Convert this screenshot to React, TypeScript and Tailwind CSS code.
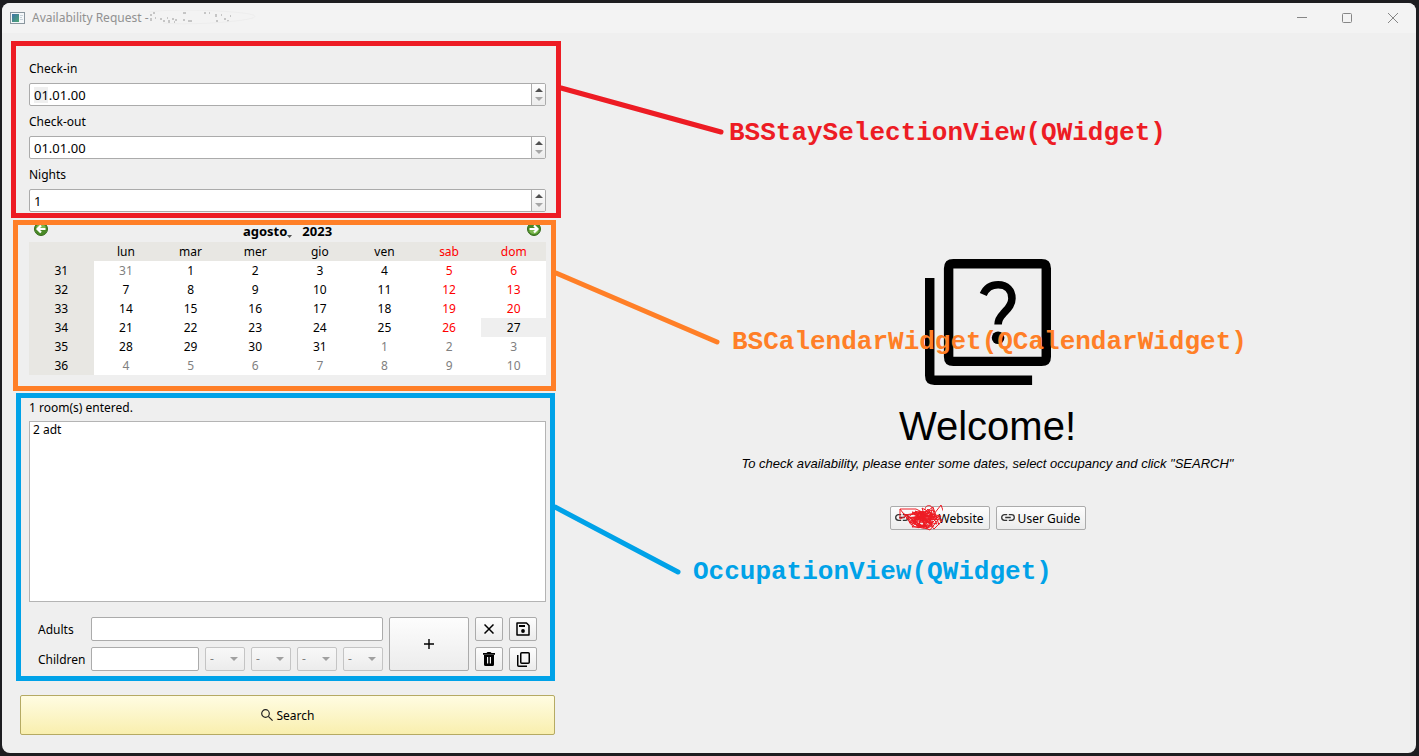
import React, { useState } from 'react';

interface Day {
    label: number;
    muted?: boolean;
    weekend?: boolean;
    selected?: boolean;
}

interface Week {
    number: number;
    days: Day[];
}

const weekdays = ['lun', 'mar', 'mer', 'gio', 'ven', 'sab', 'dom'];

// August 2023 starts on a Tuesday, the grid begins on Monday 31 July
const buildWeeks = (): Week[] =>
    Array.from({ length: 6 }, (_, row) => ({
        number: 31 + row,
        days: Array.from({ length: 7 }, (_, col) => {
            const offset = row * 7 + col;
            const muted = offset < 1 || offset > 31;
            const label = offset < 1 ? 31 : offset > 31 ? offset - 31 : offset;
            return { label, muted, weekend: col > 4, selected: offset === 27 };
        }),
    }));

const dayColor = (day: Day) => {
    if (day.selected) return 'bg-[#efefef] text-black';
    if (day.muted) return 'text-[#808080]';
    return day.weekend ? 'text-[#ff0000]' : 'text-black';
};

const buttonClass =
    'flex items-center justify-center rounded-xs border border-[#ababab] bg-linear-to-b from-[#fdfdfd] to-[#ececec]';

const TitleBar = () => (
    <header className="flex h-[30px] items-center bg-[#f3f3f3] pl-2 text-xs text-[#919191]">
        <svg className="h-3 w-4" viewBox="0 0 16 12" aria-hidden="true">
            <defs>
                <linearGradient id="app-icon" x1="0" y1="0" x2="1" y2="1">
                    <stop offset="0" stopColor="#3f74a8" />
                    <stop offset="1" stopColor="#4da673" />
                </linearGradient>
            </defs>
            <rect x="0.5" y="0.5" width="14" height="11" fill="#f5f8fa" stroke="#8a969e" />
            <rect x="2" y="2" width="7" height="8" fill="url(#app-icon)" />
            <path d="M10 3.500h3M10 5.500h2M10 7.500h3" stroke="#c8d3da" />
        </svg>
        <h1 className="ml-1.5">Availability Request -</h1>
        <svg className="h-4 w-[110px]" viewBox="0 0 110 16" aria-hidden="true">
            <path
                d="M2 4v2M2 8v3M4 3h2M6 8h1M12 8v2M14 11h2M18 8h1M20 10v3M23 9h2M25 12h1M27 9v2M34 3h3M34 10h2M39 11h4M55 3h2M60 3h1M67 4v3M68 10v2M72 5h1M75 9h2M78 11h2M81 6h1"
                stroke="#989898"
                fill="none"
            />
            <path d="M0 2C20-1 60 0 84 2s30 5 10 8-60 5-80 3" stroke="#ededed" fill="none" />
        </svg>
        <div className="ml-auto flex h-full">
            <button type="button" aria-label="Minimize" className="flex w-[45px] items-center justify-center">
                <svg className="size-[10px]" viewBox="0 0 10 10"><path d="M0 4.500h10" stroke="#868686" /></svg>
            </button>
            <button type="button" aria-label="Maximize" className="flex w-[45px] items-center justify-center">
                <svg className="size-[10px]" viewBox="0 0 10 10">
                    <rect x="0.5" y="0.5" width="9" height="9" rx="1" fill="none" stroke="#868686" />
                </svg>
            </button>
            <button type="button" aria-label="Close" className="flex w-[47px] items-center justify-center">
                <svg className="size-[10px]" viewBox="0 0 10 10"><path d="M0 0l10 10M10 0L0 10" stroke="#868686" /></svg>
            </button>
        </div>
    </header>
);

const SpinField = ({ id, label, initial, marked }: { id: string; label: string; initial: string; marked?: boolean }) => {
    const [value, setValue] = useState(initial);

    return (
        <div className="flex flex-col gap-1.5">
            <label htmlFor={id} className="h-[18px] leading-5">{label}</label>
            <div className="relative flex h-[23px] overflow-hidden rounded-xs border border-[#ababab] bg-white">
                {marked && <span className="absolute top-[3px] left-1 h-4 w-3.5 bg-[#efefef]" />}
                <input
                    id={id}
                    value={value}
                    onChange={(e) => setValue(e.target.value)}
                    className="relative min-w-0 flex-1 bg-transparent pt-0.5 pl-1 text-[13px] outline-none"
                />
                <div className="flex w-3.5 flex-col border-l border-[#ababab] bg-linear-to-b from-[#fdfdfd] to-[#ececec] py-px">
                    <button type="button" aria-label={`${label} up`} className="flex flex-1 items-center justify-center">
                        <svg className="h-1 w-2" viewBox="0 0 8 4"><path d="M0 4l4-4 4 4z" fill="#505050" /></svg>
                    </button>
                    <button type="button" aria-label={`${label} down`} className="flex flex-1 items-center justify-center">
                        <svg className="h-1 w-2" viewBox="0 0 8 4"><path d="M0 0l4 4 4-4z" fill="#a6a6a6" /></svg>
                    </button>
                </div>
            </div>
        </div>
    );
};

const GreenArrow = ({ flip }: { flip?: boolean }) => (
    <svg className={flip ? 'size-3.5 rotate-180' : 'size-3.5'} viewBox="0 0 14 14" aria-hidden="true">
        <circle cx="7" cy="7" r="6.5" fill="#4a8a27" stroke="#356b1c" />
        <path d="M2 5.500a5.300 5.300 0 0 1 10 0c-3 1.500-7 1.500-10 0z" fill="#7db84f" />
        <path d="M11.500 7H4M7 3.500L3.500 7 7 10.500" fill="none" stroke="#fff" strokeWidth="2.200" />
    </svg>
);

const Calendar = () => (
    <div>
        <div className="flex h-[21px] items-start justify-between px-[5px] pt-px">
            <button type="button" aria-label="Previous month"><GreenArrow /></button>
            <div className="flex gap-2.5 text-[13px] leading-[18px] font-bold">
                <button type="button" className="flex items-end">
                    agosto
                    <svg className="mb-0.5 h-[3px] w-[5px]" viewBox="0 0 5 3"><path d="M0 0h5L2.500 3z" fill="#505050" /></svg>
                </button>
                <button type="button">2023</button>
            </div>
            <button type="button" aria-label="Next month"><GreenArrow flip /></button>
        </div>
        <table className="w-full table-fixed border-collapse bg-white text-center">
            <thead className="bg-[#e8e7e3]">
                <tr className="h-[19px]">
                    <th className="p-0" aria-label="Week" />
                    {weekdays.map((name, i) => (
                        <th key={name} className={i > 4 ? 'p-0 leading-[19px] font-normal text-[#ff0000]' : 'p-0 leading-[19px] font-normal'}>
                            {name}
                        </th>
                    ))}
                </tr>
            </thead>
            <tbody>
                {buildWeeks().map((week) => (
                    <tr key={week.number} className="h-[19px]">
                        <th className="bg-[#e8e7e3] p-0 leading-[19px] font-normal">{week.number}</th>
                        {week.days.map((day, i) => (
                            <td key={i} className={`p-0 leading-[19px] ${dayColor(day)}`}>{day.label}</td>
                        ))}
                    </tr>
                ))}
            </tbody>
        </table>
    </div>
);

const ChildAge = ({ index }: { index: number }) => (
    <div className="relative w-10 shrink-0">
        <select
            disabled
            aria-label={`Age of child ${index}`}
            className="h-6 w-full appearance-none rounded-xs border border-[#c4c4c4] bg-linear-to-b from-[#f8f8f8] to-[#ececec] pl-1 text-[#808080] opacity-100"
        >
            <option>-</option>
        </select>
        <svg className="pointer-events-none absolute top-2.5 right-[7px] h-1 w-2" viewBox="0 0 8 4">
            <path d="M0 0l4 4 4-4z" fill="#a0a0a0" />
        </svg>
    </div>
);

const Occupation = () => (
    <div>
        <p id="rooms" className="h-[18px] leading-[18px]">1 room(s) entered.</p>
        <ul aria-labelledby="rooms" className="mt-1 h-[181px] border border-[#b4b4b4] bg-white px-[3px] leading-4">
            <li>2 adt</li>
        </ul>
        <div className="mx-[9px] mt-[15px] grid grid-cols-[47px_minmax(0,1fr)_80px_28px_28px] grid-rows-[24px_24px] gap-1.5">
            <label htmlFor="adults" className="self-center pt-0.5">Adults</label>
            <input id="adults" className="w-full rounded-xs border border-[#ababab] bg-white px-1" />
            <button type="button" aria-label="Add room" className={`row-span-2 ${buttonClass}`}>
                <svg className="size-[10px]" viewBox="0 0 10 10"><path d="M5 0v10M0 5h10" stroke="#000" strokeWidth="1.400" /></svg>
            </button>
            <button type="button" aria-label="Clear" className={buttonClass}>
                <svg className="size-[10px]" viewBox="0 0 10 10"><path d="M.5.5l9 9M9.500.5l-9 9" stroke="#000" strokeWidth="1.500" /></svg>
            </button>
            <button type="button" aria-label="Save" className={buttonClass}>
                <svg className="size-3.5" viewBox="0 0 14 14">
                    <path d="M1 1h9.500l2.500 2.500V13H1z" fill="none" stroke="#000" strokeWidth="1.500" strokeLinejoin="round" />
                    <path d="M3 3h6v2H3z" />
                    <circle cx="7" cy="9" r="1.900" />
                </svg>
            </button>
            <label htmlFor="children" className="self-center pt-0.5">Children</label>
            <div className="flex gap-1.5">
                <input id="children" className="h-6 w-0 flex-1 rounded-xs border border-[#ababab] bg-white px-1" />
                {[1, 2, 3, 4].map((n) => <ChildAge key={n} index={n} />)}
            </div>
            <button type="button" aria-label="Delete" className={buttonClass}>
                <svg className="h-3.5 w-3" viewBox="0 0 12 14">
                    <path fillRule="evenodd" d="M0 1h3.500l1-1h3l1 1H12v1.800H0zM1 3h10v9.500q0 1.500-1.500 1.500h-7Q1 14 1 12.500zM4 5v6.500h1.200V5zM6.800 5v6.500H8V5z" />
                </svg>
            </button>
            <button type="button" aria-label="Duplicate" className={buttonClass}>
                <svg className="h-[15px] w-[13px]" viewBox="0 0 13 15" fill="none" stroke="#000" strokeWidth="1.500">
                    <rect x="3.750" y="0.750" width="8.500" height="10.500" rx="1" />
                    <path d="M.75 3v10.250q0 1 1 1H10" />
                </svg>
            </button>
        </div>
    </div>
);

const LinkIcon = () => (
    <svg className="h-[7px] w-3.5" viewBox="0 0 14 7" fill="none" stroke="#333" strokeWidth="1.300" aria-hidden="true">
        <path d="M6.200.7H3.500a2.800 2.800 0 0 0 0 5.600h2.700M7.800.7h2.700a2.800 2.800 0 0 1 0 5.600H7.800M4.200 3.500h5.600" />
    </svg>
);

const Scribble = () => (
    <svg
        className="pointer-events-none absolute -top-[3px] left-2 h-7 w-[44px]"
        viewBox="0 0 44 28"
        fill="none"
        stroke="#ed1c24"
        aria-hidden="true"
    >
        <path d="M1 5h16l8 4-16 2-8 4V5l12 16 8-14 5 16-16-5 22-10-6 15-19-9 26-3-9 11L6 11l29-5-6 18-13-16 19 14-22 1 16-18 9 15-25-6 27-2-12 12-12-17 22 8-27 3 20 8 11-14-21-4 14 17 8-8h5l-6-16-14 18-5-15 20 12-24-2 15-11 6 18" />
        <path d="M26 6c0-6 8-6 7 0l-3 12c-3 8-18 7-20-1s13-14 21-4-7 16-14 7 6-12 13-7M4 9l18 13 14-9-23-5 20 13-15 1-6-8 25-4" />
        <path d="M15 10l17 9M17 16l18-6M14 18l16-10M20 8l8 17M24 7l-5 17M18 13h19M16 15h17M20 18h14" strokeWidth="1.500" />
    </svg>
);

const Welcome = () => (
    <main className="ml-1 flex flex-1 flex-col items-center justify-center pt-0.5 font-['Liberation_Sans',Arial,sans-serif]">
        <svg className="size-[126px]" viewBox="0 0 20 20" aria-hidden="true">
            <path d="M0 3h1.500v15.500H17V20H1.500Q0 20 0 18.500z" />
            <path fillRule="evenodd" d="M4.500 0h14Q20 0 20 1.500v14q0 1.500-1.500 1.500h-14Q3 17 3 15.500v-14Q3 0 4.500 0zm0 1.500v14h14v-14z" />
            <path
                d="M9.250 5.650C9.700 4.600 10.500 4.100 11.600 4.100c1.400 0 2.200.9 2.200 2.150 0 1.150-.8 1.750-1.400 2.450-.6.600-.8 1-.8 1.700"
                fill="none"
                stroke="#000"
                strokeWidth="1.200"
            />
            <circle cx="11.600" cy="12.500" r="1" />
        </svg>
        <h2 className="mt-[17px] text-[40px] leading-[48px]">Welcome!</h2>
        <p className="mt-1 text-[13px] leading-5 italic">
            To check availability, please enter some dates, select occupancy and click "SEARCH"
        </p>
        <nav className="mt-8 flex gap-1.5 leading-5 font-['Noto_Sans',sans-serif]">
            <a href="#website" className={`relative h-6 w-[100px] ${buttonClass}`}>
                <span className="absolute left-1"><LinkIcon /></span>
                <span className="ml-auto pt-0.5 pr-[5px]">Website</span>
                <Scribble />
            </a>
            <a href="#guide" className={`h-6 w-[90px] gap-[3px] ${buttonClass}`}>
                <LinkIcon />
                <span className="pt-0.5">User Guide</span>
            </a>
        </nav>
    </main>
);

const calloutText = "absolute font-['Liberation_Mono','Courier_New',monospace] text-[26px] leading-8 font-bold whitespace-nowrap";

const App = () => (
    <div className="flex min-h-screen bg-[#1d1d20] pt-[3px] pr-[3px] pb-[3px] pl-0.5 font-['Noto_Sans',sans-serif] text-xs text-black">
        <div className="flex flex-1 flex-col overflow-hidden rounded-lg bg-[#efefef]">
            <TitleBar />
            <div className="flex flex-1">
                <div className="relative z-10 flex w-2/5 max-w-[553px] flex-col pt-[26px] pr-0 pb-[18px] pl-[18px]">
                    <section className="relative mx-[9px] flex flex-col gap-1.5">
                        <SpinField id="check-in" label="Check-in" initial="01.01.00" marked />
                        <SpinField id="check-out" label="Check-out" initial="01.01.00" />
                        <SpinField id="nights" label="Nights" initial="1" />
                        <div className="pointer-events-none absolute -top-[18px] -right-[15px] -bottom-[6px] -left-[18px] border-5 border-[#ed1c24]">
                            <svg className="absolute top-[38px] left-full h-14 w-[170px]" viewBox="0 0 170 56">
                                <path d="M5 4l160 44" stroke="#ed1c24" strokeWidth="5" strokeLinecap="round" />
                            </svg>
                            <p className={`top-[71px] left-full ml-[173px] text-[#ed1c24] ${calloutText}`}>BSStaySelectionView(QWidget)</p>
                        </div>
                    </section>
                    <section className="relative mx-[9px] mt-[9px]">
                        <Calendar />
                        <div className="pointer-events-none absolute -top-px -right-[10px] -bottom-4 -left-4 border-5 border-[#ff7f27]">
                            <svg className="absolute top-[42px] left-full h-[90px] w-[170px]" viewBox="0 0 170 90">
                                <path d="M5 6l161 69" stroke="#ff7f27" strokeWidth="5" strokeLinecap="round" />
                            </svg>
                            <p className={`top-[101px] left-full ml-[181px] text-[#ff7f27] ${calloutText}`}>BSCalendarWidget(QCalendarWidget)</p>
                        </div>
                    </section>
                    <section className="relative mx-[9px] mt-6">
                        <Occupation />
                        <div className="pointer-events-none absolute -top-1.5 -right-[9px] -bottom-[10px] -left-[13px] border-5 border-[#00a2e8]">
                            <svg className="absolute top-[100px] left-full h-[90px] w-[140px]" viewBox="0 0 140 90">
                                <path d="M5 9l123 65" stroke="#00a2e8" strokeWidth="5" strokeLinecap="round" />
                            </svg>
                            <p className={`top-[158px] left-full ml-[143px] text-[#00a2e8] ${calloutText}`}>OccupationView(QWidget)</p>
                        </div>
                    </section>
                    <button
                        type="button"
                        className="mt-6 flex h-10 items-center justify-center gap-1 rounded-xs border border-[#b5aa63] bg-linear-to-b from-[#fffce2] to-[#f9efae]"
                    >
                        <svg className="size-3" viewBox="0 0 12 12" fill="none" stroke="#222" strokeWidth="1.200" aria-hidden="true">
                            <circle cx="4.500" cy="4.500" r="3.800" />
                            <path d="M7.300 7.300l4.300 4.300" />
                        </svg>
                        <span className="pt-0.5">Search</span>
                    </button>
                </div>
                <Welcome />
            </div>
        </div>
    </div>
);

export default App;
